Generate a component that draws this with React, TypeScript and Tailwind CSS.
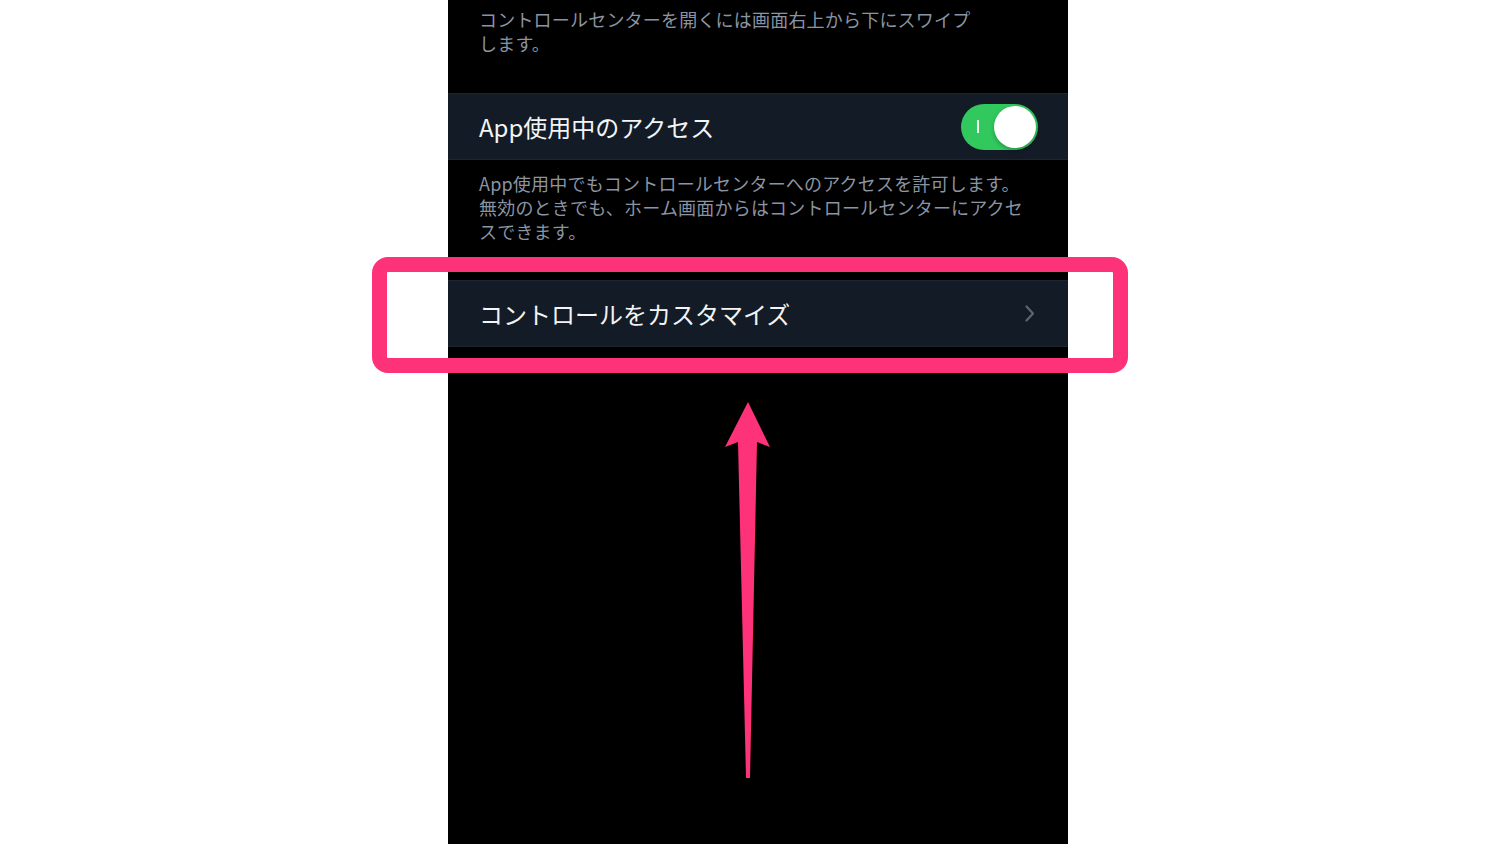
const jp = { fontFamily: '"Noto Sans CJK JP", "Noto Sans", sans-serif' };

function Toggle() {
  return (
    <div className="relative flex h-[46px] w-[77px] items-center rounded-full bg-[#31c85d]">
      <span className="ml-[16px] h-[13px] w-[2px] bg-[#e9fbee]" />
      <span className="absolute right-[2px] top-[2px] h-[42px] w-[42px] rounded-full bg-white shadow-[0_2px_4px_rgba(0,0,0,0.25)]" />
    </div>
  );
}

function Chevron() {
  return (
    <svg width="10" height="17" viewBox="0 0 10 17" fill="none">
      <path d="M1.5 1.5 L8 8.5 L1.5 15.5" stroke="#5c6571" strokeWidth="2.2" strokeLinecap="round" strokeLinejoin="round" />
    </svg>
  );
}

function Note({ children }: { children: React.ReactNode }) {
  return (
    <p className="px-[31px] text-[18px] leading-[24px] tracking-[0.2px] text-[#8a94a3]" style={jp}>
      {children}
    </p>
  );
}

export default function App() {
  return (
    <div className="relative h-[844px] w-[1500px] overflow-hidden bg-white">
      <div className="ml-[448px] flex h-full w-[620px] flex-col bg-black" style={jp}>
        <div className="pt-[7px]">
          <Note>
            コントロールセンターを開くには画面右上から下にスワイプ
            <br />
            します。
          </Note>
        </div>

        <div className="mt-[38px] flex h-[67px] items-center justify-between border-y border-[#1d2530] bg-[#131b26] pl-[31px] pr-[30px]">
          <span className="text-[24px] text-[#f2f4f6]">App使用中のアクセス</span>
          <Toggle />
        </div>

        <div className="mt-[11px]">
          <Note>
            App使用中でもコントロールセンターへのアクセスを許可します。
            <br />
            無効のときでも、ホーム画面からはコントロールセンターにアクセ
            <br />
            スできます。
          </Note>
        </div>

        <div className="mt-[37px] flex h-[67px] items-center justify-between border-y border-[#1d2530] bg-[#131b26] pl-[31px] pr-[33px]">
          <span className="text-[24px] text-[#f2f4f6]">コントロールをカスタマイズ</span>
          <Chevron />
        </div>
      </div>

      {/* highlight frame around the customize row */}
      <div className="absolute left-[372px] top-[257px] h-[116px] w-[756px] rounded-[16px] border-[15px] border-[#fe3278]" />

      {/* pointer arrow */}
      <svg className="absolute left-0 top-0" width="1500" height="844" viewBox="0 0 1500 844">
        <polygon
          points="748,402 770,447 757,442 750,778 746,778 738,442 725,447"
          fill="#fe3278"
        />
      </svg>
    </div>
  );
}
